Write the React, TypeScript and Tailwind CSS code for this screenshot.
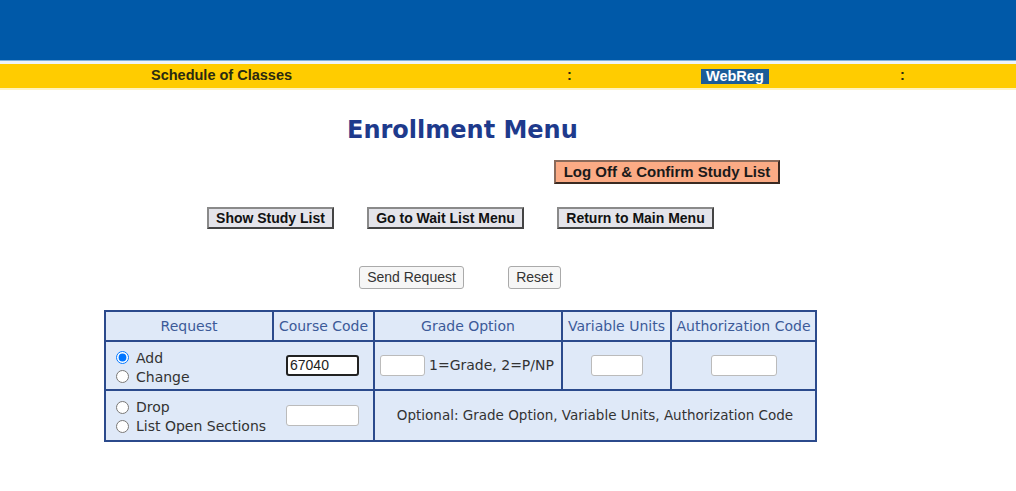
import React from "react";

const dv = { fontFamily: '"DejaVu Sans", Verdana, sans-serif' };
const ar = { fontFamily: '"Liberation Sans", Arial, sans-serif' };

function GrayBtn({ children, w }: { children: React.ReactNode; w: string }) {
  return (
    <button
      className={`${w} h-[22px] bg-[#e4e4ea] border-2 border-t-[#8a8a8a] border-l-[#8a8a8a] border-r-[#444] border-b-[#444] text-[14px] font-bold text-[#111] flex items-center justify-center whitespace-nowrap`}
      style={ar}
    >
      {children}
    </button>
  );
}

export default function App() {
  return (
    <div className="w-[1016px] h-[491px] bg-white overflow-hidden relative" style={ar}>
      <div className="h-[60px] bg-[#0059a8]" />
      <div className="h-[1px] bg-[#7fb0dc]" />
      <div className="h-[3px] bg-[#eef4fa]" />
      <div className="h-[24px] bg-[#ffcc00] flex items-center text-[14.5px] font-bold text-[#2a2a10]">
        <div className="w-[151px]" />
        <div className="w-[416px]">Schedule of Classes</div>
        <div className="w-[134px]">:</div>
        <div className="w-[199px] flex">
          <span className="bg-[#1c5c98] text-white px-[5px] leading-[15px] h-[15px]">WebReg</span>
        </div>
        <div>:</div>
      </div>
      <div className="h-[2px] bg-[#fff3c0]" />

      <div className="pl-[104px]">
        <div className="w-[712px] flex flex-col">
          <div className="h-[25px]" />
          <div className="pl-[243px] text-[24px] font-bold text-[#1e3a8c] leading-[30px]" style={dv}>
            Enrollment Menu
          </div>
          <div className="h-[15px]" />
          <div className="pl-[450px]">
            <button
              className="w-[226px] h-[24px] bg-[#fbab85] border-2 border-t-[#8a6a5a] border-l-[#8a6a5a] border-r-[#3a2a22] border-b-[#3a2a22] text-[15px] font-bold text-[#1a1a1a] flex items-center justify-center whitespace-nowrap"
              style={ar}
            >
              Log Off &amp; Confirm Study List
            </button>
          </div>
          <div className="h-[23px]" />
          <div className="flex pl-[103px] gap-[33px]">
            <GrayBtn w="w-[127px]">Show Study List</GrayBtn>
            <GrayBtn w="w-[157px]">Go to Wait List Menu</GrayBtn>
            <GrayBtn w="w-[157px]">Return to Main Menu</GrayBtn>
          </div>
          <div className="h-[37px]" />
          <div className="flex pl-[255px] gap-[44px]">
            <button className="w-[105px] h-[23px] bg-[#f6f6f6] border border-[#aaa] rounded-[3px] text-[14px] text-[#333]" style={ar}>
              Send Request
            </button>
            <button className="w-[53px] h-[23px] bg-[#f6f6f6] border border-[#aaa] rounded-[3px] text-[14px] text-[#333]" style={ar}>
              Reset
            </button>
          </div>
          <div className="h-[21px]" />
          <table className="w-[713px] border-collapse border-2 border-[#2b4a8c] bg-[#dfe9f8] text-[14px]" style={dv}>
            <tbody>
              <tr className="h-[30px] text-[#3c5a98]">
                <td className="border-2 border-[#2b4a8c] w-[168px] text-center">Request</td>
                <td className="border-2 border-[#2b4a8c] w-[101px] text-center whitespace-nowrap">Course Code</td>
                <td className="border-2 border-[#2b4a8c] w-[188px] text-center">Grade Option</td>
                <td className="border-2 border-[#2b4a8c] w-[109px] text-center whitespace-nowrap">Variable Units</td>
                <td className="border-2 border-[#2b4a8c] text-center whitespace-nowrap">Authorization Code</td>
              </tr>
              <tr className="h-[49px] text-[#333]">
                <td colSpan={2} className="border-2 border-[#2b4a8c] p-0">
                  <div className="flex items-center">
                    <div className="w-[168px] pl-[10px] pt-[3px] flex flex-col gap-[1px] leading-[18px]">
                      <label className="flex items-center gap-[7px]">
                        <input type="radio" name="r" defaultChecked className="w-[13px] h-[13px] m-0" />
                        Add
                      </label>
                      <label className="flex items-center gap-[7px]">
                        <input type="radio" name="r" className="w-[13px] h-[13px] m-0" />
                        Change
                      </label>
                    </div>
                    <div className="pl-[12px]">
                      <input
                        defaultValue="67040"
                        className="w-[73px] h-[21px] border-2 border-[#222] rounded-[3px] bg-white px-[2px] text-[14px] text-[#222] outline-none"
                        style={ar}
                      />
                    </div>
                  </div>
                </td>
                <td className="border-2 border-[#2b4a8c] p-0">
                  <div className="flex items-center pl-[5px] gap-[4px] whitespace-nowrap">
                    <input className="w-[45px] h-[21px] border border-[#bbb] rounded-[3px] bg-white" />
                    <span>1=Grade, 2=P/NP</span>
                  </div>
                </td>
                <td className="border-2 border-[#2b4a8c] text-center p-0">
                  <input className="w-[52px] h-[21px] border border-[#bbb] rounded-[3px] bg-white" />
                </td>
                <td className="border-2 border-[#2b4a8c] text-center p-0">
                  <input className="w-[66px] h-[21px] border border-[#bbb] rounded-[3px] bg-white" />
                </td>
              </tr>
              <tr className="h-[51px] text-[#333]">
                <td colSpan={2} className="border-2 border-[#2b4a8c] p-0">
                  <div className="flex items-center">
                    <div className="w-[168px] pl-[10px] pt-[2px] flex flex-col gap-[1px] leading-[18px]">
                      <label className="flex items-center gap-[7px]">
                        <input type="radio" name="r" className="w-[13px] h-[13px] m-0" />
                        Drop
                      </label>
                      <label className="flex items-center gap-[7px] whitespace-nowrap">
                        <input type="radio" name="r" className="w-[13px] h-[13px] m-0" />
                        List Open Sections
                      </label>
                    </div>
                    <div className="pl-[12px]">
                      <input className="w-[73px] h-[21px] border border-[#bbb] rounded-[3px] bg-white" />
                    </div>
                  </div>
                </td>
                <td colSpan={3} className="border-2 border-[#2b4a8c] text-center text-[13.5px] whitespace-nowrap">
                  Optional: Grade Option, Variable Units, Authorization Code
                </td>
              </tr>
            </tbody>
          </table>
        </div>
      </div>
    </div>
  );
}
